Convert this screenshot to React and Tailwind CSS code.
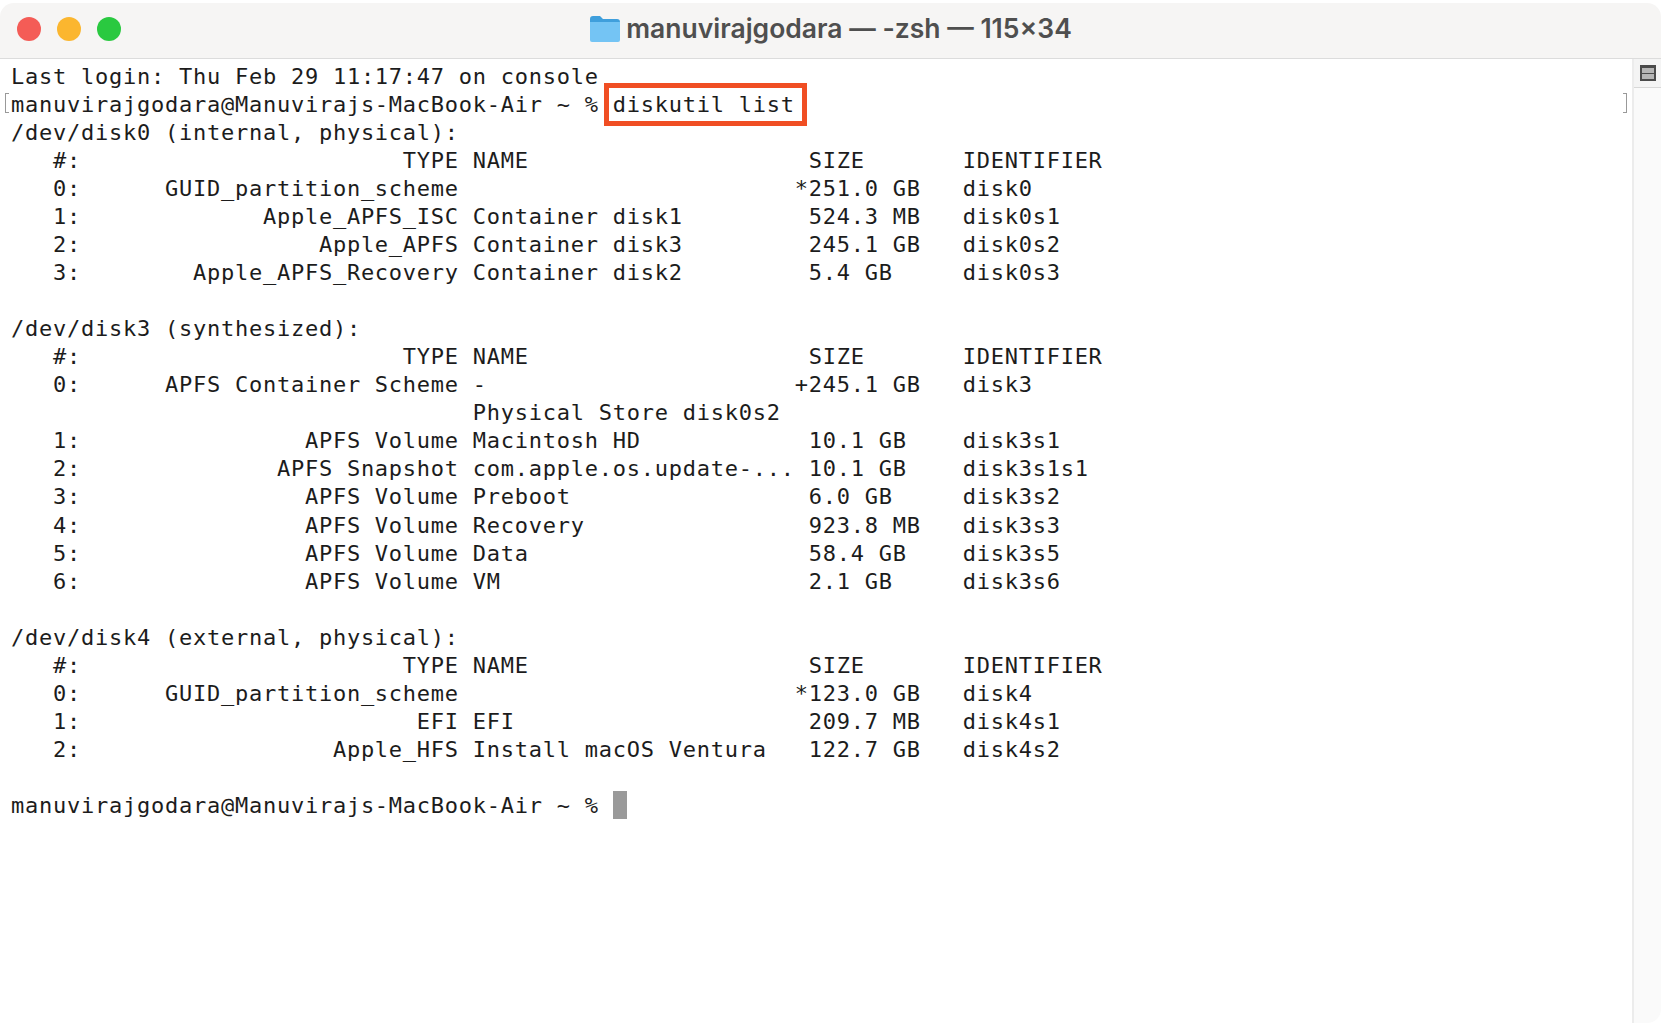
import React from "react";

const before = `Last login: Thu Feb 29 11:17:47 on console
manuvirajgodara@Manuvirajs-MacBook-Air ~ % `;

const output = `diskutil list
/dev/disk0 (internal, physical):
   #:                       TYPE NAME                    SIZE       IDENTIFIER
   0:      GUID_partition_scheme                        *251.0 GB   disk0
   1:             Apple_APFS_ISC Container disk1         524.3 MB   disk0s1
   2:                 Apple_APFS Container disk3         245.1 GB   disk0s2
   3:        Apple_APFS_Recovery Container disk2         5.4 GB     disk0s3

/dev/disk3 (synthesized):
   #:                       TYPE NAME                    SIZE       IDENTIFIER
   0:      APFS Container Scheme -                      +245.1 GB   disk3
                                 Physical Store disk0s2
   1:                APFS Volume Macintosh HD            10.1 GB    disk3s1
   2:              APFS Snapshot com.apple.os.update-... 10.1 GB    disk3s1s1
   3:                APFS Volume Preboot                 6.0 GB     disk3s2
   4:                APFS Volume Recovery                923.8 MB   disk3s3
   5:                APFS Volume Data                    58.4 GB    disk3s5
   6:                APFS Volume VM                      2.1 GB     disk3s6

/dev/disk4 (external, physical):
   #:                       TYPE NAME                    SIZE       IDENTIFIER
   0:      GUID_partition_scheme                        *123.0 GB   disk4
   1:                        EFI EFI                     209.7 MB   disk4s1
   2:                  Apple_HFS Install macOS Ventura   122.7 GB   disk4s2

manuvirajgodara@Manuvirajs-MacBook-Air ~ % `;

const FolderIcon = () => (
  <svg width="32" height="28" viewBox="0 0 32 28">
    <path d="M1 4a3 3 0 0 1 3-3h7l3 3h14a3 3 0 0 1 3 3v4H1z" fill="#3f9fdc" />
    <path d="M1 7h30v18a2 2 0 0 1-2 2H3a2 2 0 0 1-2-2z" fill="#74c4f4" />
  </svg>
);

const App = () => {
  return (
    <div className="h-[1023px] w-[1661px] overflow-hidden bg-white pt-[3px]">
      <header className="relative flex h-[56px] items-center justify-center rounded-t-[14px] border-b border-[#dcdcdc] bg-[#f6f5f4]">
        <div className="absolute left-[17px] top-[14px] flex gap-4">
          <span className="h-6 w-6 rounded-full bg-[#f45c56]" />
          <span className="h-6 w-6 rounded-full bg-[#fbb62f]" />
          <span className="h-6 w-6 rounded-full bg-[#2ac940]" />
        </div>
        <div className="mb-[3px] flex items-center gap-[5px]">
          <FolderIcon />
          <span className="font-['Inter',sans-serif] text-[26.5px] font-semibold text-[#4f4f4f]">
            manuvirajgodara — -zsh — 115×34
          </span>
        </div>
      </header>

      <div className="flex h-[964px]">
        <main className="relative min-w-0 flex-1 pl-[11px] pt-[4px]">
          <pre className="font-['DejaVu_Sans_Mono',monospace] text-[22px] leading-[28.03px] tracking-[0.75px] text-[#1c1c1c]">
            {before}
            <span className="relative">
              <span className="absolute -left-[9px] -top-[9px] h-[43px] w-[203px] border-[5px] border-[#f04e23]" />
            </span>
            {output}
            <span className="inline-block h-[28px] w-[14px] -translate-y-[1px] bg-[#9a9a9a] align-top" />
          </pre>
          <span className="absolute left-[5px] top-[34px] h-[20px] w-[4px] border-y border-l border-[#999999]" />
          <span className="absolute right-[5px] top-[34px] h-[20px] w-[4px] border-y border-r border-[#999999]" />
        </main>

        <aside className="w-[29px] rounded-br-[14px] border-l-2 border-[#ececec] bg-[#fafafa]">
          <div className="flex h-[29px] items-center justify-center border-b border-[#d8d8d8] bg-[#f4f4f4]">
            <div className="flex h-[16px] w-[16px] flex-col justify-center gap-[1px] bg-[#4a4a4a] p-[2px]">
              <span className="h-[5px] bg-[#b5b5b5]" />
              <span className="h-[5px] bg-[#b5b5b5]" />
            </div>
          </div>
        </aside>
      </div>
    </div>
  );
};

export default App;
